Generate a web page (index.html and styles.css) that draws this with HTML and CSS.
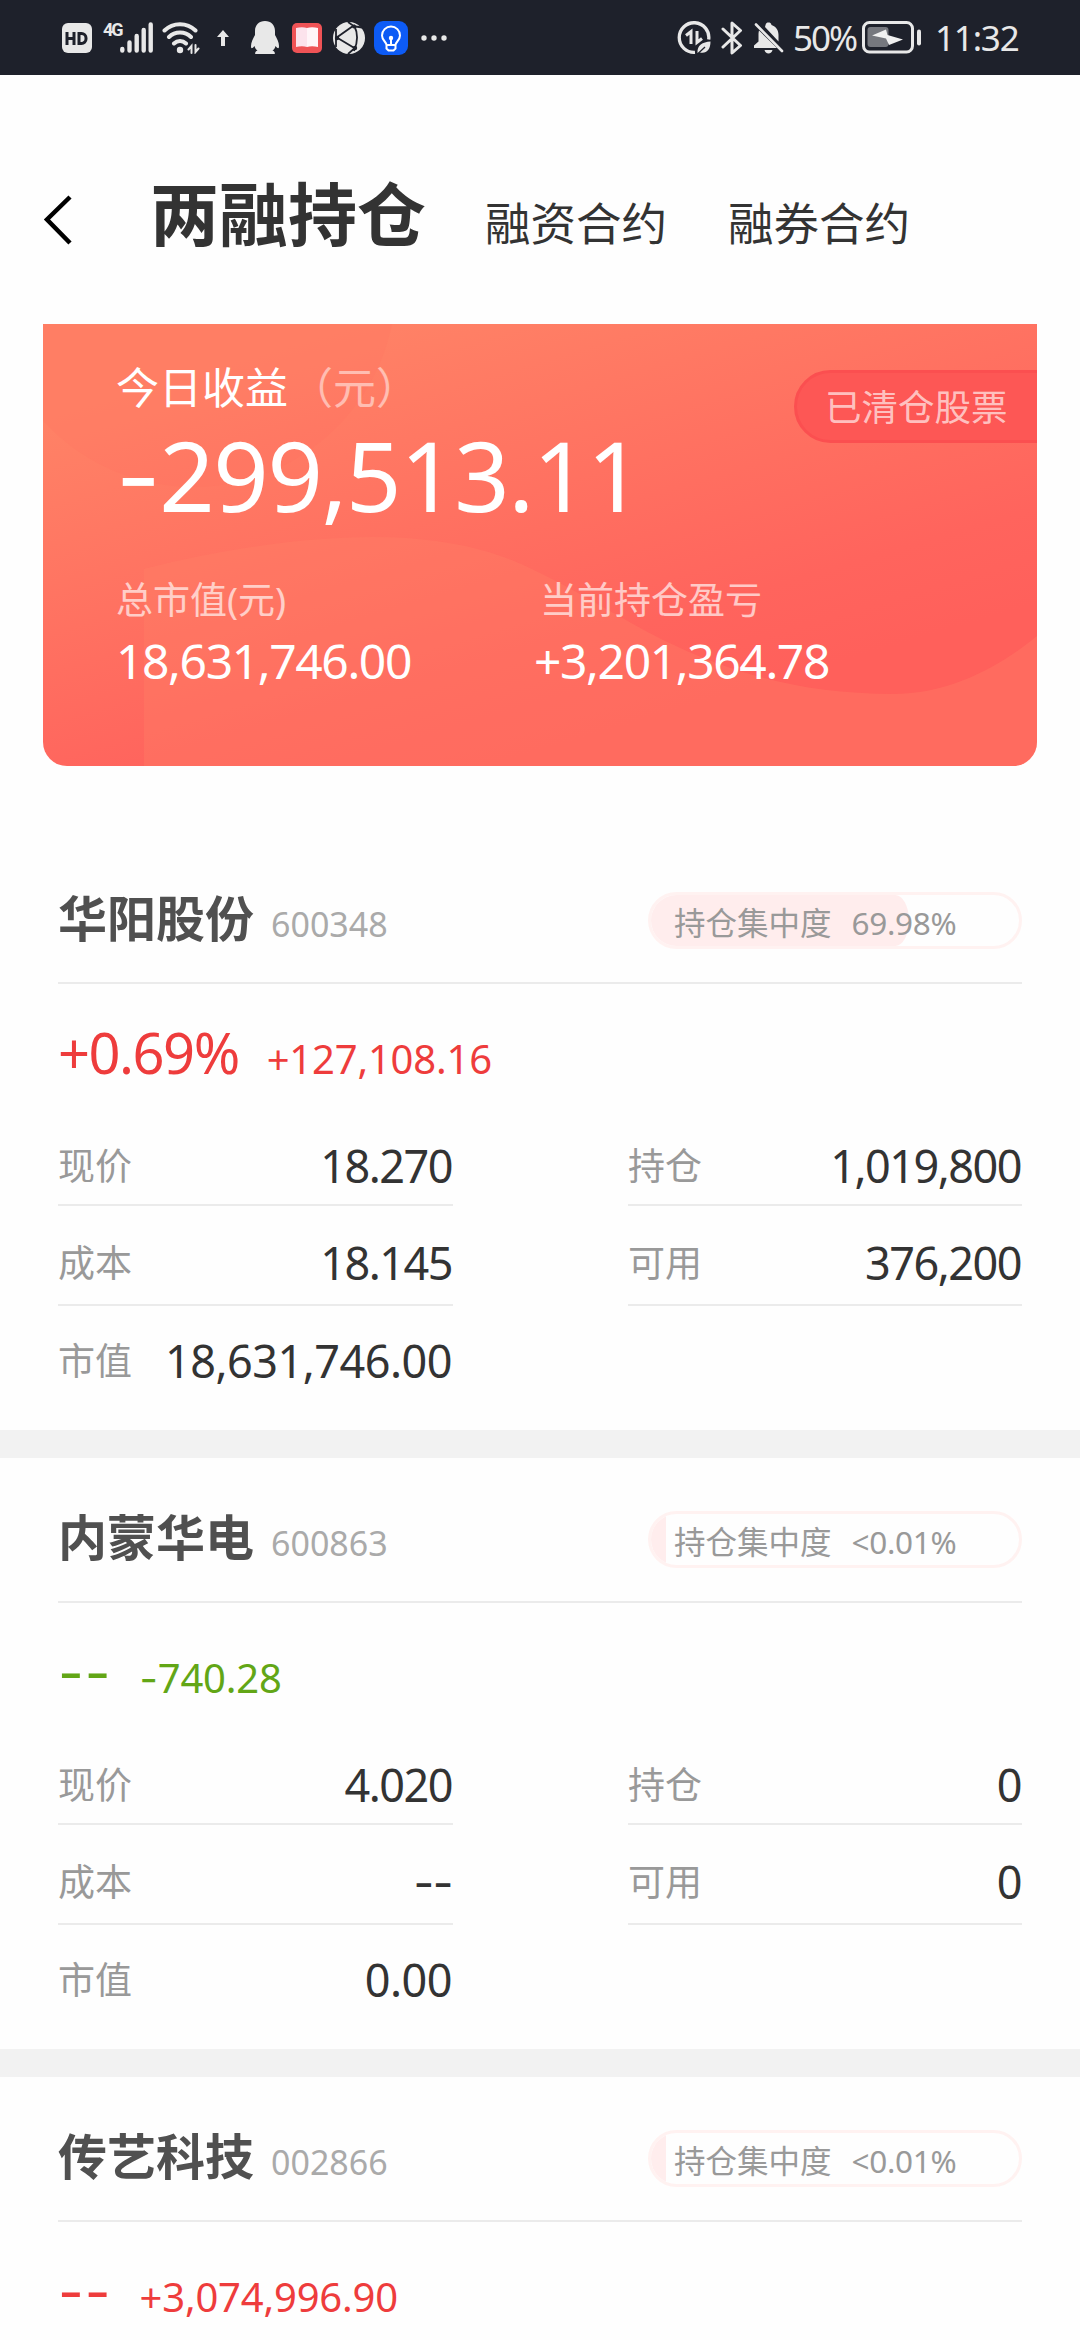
FILE: index.html
```html
<!DOCTYPE html>
<html lang="zh-CN">
<head>
    <meta charset="utf-8">
    <title>两融持仓</title>
    <link rel="stylesheet" href="styles.css">
</head>
<body>
    <div class="status-bar">
        <div class="status-left">
            <svg class="icon-hd" width="30" height="30" viewBox="0 0 30 30">
                <rect width="30" height="30" rx="6" fill="#e8e8e8"/>
                <path d="M5 9v13M12 9v13M5 15.500h7M17 10.500v10h2.500a4.500 4.500 0 0 0 4.500-4.500v-1a4.500 4.500 0 0 0-4.500-4.500z" fill="none" stroke="#1e212b" stroke-width="3"/>
            </svg>
            <span class="net">4G</span>
            <svg width="33" height="31" viewBox="0 0 33 31" stroke="#e8e8e8" stroke-width="4.400" stroke-linecap="round">
                <path d="M2.300 27v1.500M9.500 20.500v8M16.700 14v14.500M23.700 8v20.500M30.700 2.500v26"/>
            </svg>
            <svg class="icon-wifi" width="38" height="32" viewBox="0 0 38 32" fill="none" stroke="#e8e8e8" stroke-width="4" stroke-linecap="round">
                <path d="M2.500 8.500C11 0 25 0 33.500 8.500M7 15C13 9 23 9 29 15M12 21.500C15.500 18 20.500 18 24 21.500"/>
                <circle cx="18" cy="28" r="3.200" fill="#e8e8e8" stroke="none"/>
                <path d="M26.500 27.500l3-3.500v7M33.500 23v7l3-3.500" stroke-width="2"/>
            </svg>
            <svg class="icon-up" width="12" height="16" viewBox="0 0 12 16" fill="#e8e8e8">
                <path d="M6 0l6 7H8v9H4V7H0z"/>
            </svg>
            <svg class="icon-qq" width="28" height="33" viewBox="0 0 28 33" fill="#e8e8e8">
                <path d="M14 0C8 0 4 4 4 10v4C2 18 0 21 0 25c0 3 1 3 3.500 0 .5 2 1.500 3.500 3 4.500-2 .8-2.500 2-2.300 3.500h19.600c.2-1.500-.3-2.700-2.300-3.500 1.500-1 2.500-2.500 3-4.500 2.500 3 3.500 3 3.500 0 0-4-2-7-4-11v-4C24 4 20 0 14 0z"/>
            </svg>
            <svg class="icon-book" width="30" height="30" viewBox="0 0 30 30">
                <rect width="30" height="30" rx="5" fill="#ef5356"/>
                <path d="M4 5c4-1 8-1 11 0v19c-3-1-7-1-11 0z" fill="#fce3ec"/>
                <path d="M15 5c3-1 7-1 11 0v19c-4-1-8-1-11 0z" fill="#fff5f8"/>
            </svg>
            <svg class="icon-globe" width="32" height="32" viewBox="0 0 32 32">
                <circle cx="16" cy="16" r="16" fill="#e8e8e8"/>
                <path d="M3 16L20 4l12 2M3 15l20 12M21 3c4 8 4 17 0 26M3 7v18M15 0l7 5M23 25l-8 7" fill="none" stroke="#1e212b" stroke-width="1.800"/>
                <g fill="#1e212b"><circle cx="21" cy="4.500" r="2"/><circle cx="4" cy="16" r="2.200"/><circle cx="22" cy="26" r="2.200"/></g>
            </svg>
            <svg class="icon-bulb" width="34" height="34" viewBox="0 0 34 34">
                <rect width="34" height="34" rx="9" fill="#0d5bf5"/>
                <path d="M12.500 24c0-3-4.500-4.500-4.500-9.500a9 9 0 0 1 18 0c0 5-4.500 6.500-4.500 9.500zM12.500 24v3.500l2 2h5l2-2V24M17 18v6" fill="none" stroke="#fff" stroke-width="2"/>
                <circle cx="17" cy="17" r="2.200" fill="#fff"/>
            </svg>
            <svg class="icon-more" width="26" height="6" viewBox="0 0 26 6" fill="#e8e8e8">
                <circle cx="3" cy="3" r="2.700"/><circle cx="13" cy="3" r="2.700"/><circle cx="23" cy="3" r="2.700"/>
            </svg>
        </div>
        <div class="status-right">
            <svg width="34" height="34" viewBox="0 0 34 34" fill="none" stroke="#e8e8e8">
                <path d="M18 31.300A14.800 14.800 0 1 1 31.700 18.500" stroke-width="3.300"/>
                <path d="M9 14.500l5-4V23M20 10v11.500l5-4" stroke-width="3"/>
                <path d="M20.500 32c-.5-8 5-11 13-11.500 0 8-4 12.500-10.500 11z" fill="#e8e8e8" stroke="none"/>
                <path d="M20 33.500l8-7.500" stroke="#1e212b" stroke-width="1.300"/>
            </svg>
            <svg class="icon-bt" width="22" height="34" viewBox="0 0 22 34" fill="none" stroke="#e8e8e8" stroke-width="3" stroke-linejoin="round" stroke-linecap="round">
                <path d="M2 8l17.500 16.500L11 32V2l8.500 7.500L2 26"/>
            </svg>
            <svg class="icon-bell" width="30" height="32" viewBox="0 0 30 32">
                <path d="M11.500 3C12 1 13 .5 14.500.5S17 1 17.500 3C22 4.500 24.500 8 24.500 13v6.500L11 5M5 8.500L23 26H0v-2.500l4.500-4V13c0-2 .2-3 .5-4.500zM10.500 28h8c-.5 2-2 3.500-4 3.500s-3.500-1.500-4-3.500z" fill="#e8e8e8"/>
                <path d="M2 2.500L28 29" stroke="#e8e8e8" stroke-width="2.600" stroke-linecap="round"/>
            </svg>
            <span class="battery-text">50%</span>
            <svg class="icon-battery" width="59" height="33" viewBox="0 0 59 33">
                <rect x="1.500" y="1.500" width="49" height="29.500" rx="6" fill="none" stroke="#e8e8e8" stroke-width="3"/>
                <rect x="5.500" y="6" width="21" height="20" rx="3" fill="#76787e"/>
                <path d="M10 14.500L24 8.500l1.500 5.500L41 18.500 27 24l-3-6.500z" fill="#f0f0f0"/>
                <rect x="55" y="8.500" width="4" height="16" rx="2" fill="#e8e8e8"/>
            </svg>
            <span class="clock">11:32</span>
        </div>
    </div>

    <div class="nav">
        <svg class="back" width="30" height="56" viewBox="0 0 30 56" fill="none" stroke="#000" stroke-width="4.500">
            <path d="M28 5L5 27.500 28 51"/>
        </svg>
        <span class="tab active">两融持仓</span>
        <span class="tab">融资合约</span>
        <span class="tab">融券合约</span>
    </div>

    <div class="card">
        <svg class="card-bg" width="994" height="442" viewBox="0 0 994 442">
            <defs>
                <linearGradient id="base" gradientUnits="userSpaceOnUse" x1="390" y1="-20" x2="520" y2="420">
                    <stop offset="0" stop-color="#ff8266"/>
                    <stop offset="0.800" stop-color="#ff645d"/>
                    <stop offset="1" stop-color="#ff605b"/>
                </linearGradient>
            </defs>
            <rect width="994" height="442" fill="url(#base)"/>
            <circle cx="150" cy="-40" r="203" fill="#ff6b5c" fill-opacity="0.150"/>
            <path d="M101 442V245C180 225 260 213 330 213C420 213 470 235 497 249C540 270 580 296 620 316C690 350 760 370 850 370C910 370 960 340 994 312V442z" fill="#ff8068" fill-opacity="0.350"/>
        </svg>
        <div class="card-body">
            <div class="card-title">今日收益<span class="unit">（元）</span></div>
            <div class="card-profit"><span class="dash">-</span>299,513.11</div>
            <div class="card-totals">
                <div class="total">
                    <div class="total-label">总市值(元)</div>
                    <div class="total-value">18,631,746.00</div>
                </div>
                <div class="total">
                    <div class="total-label indent">当前持仓盈亏</div>
                    <div class="total-value">+3,201,364.78</div>
                </div>
            </div>
        </div>
        <div class="cleared">已清仓股票</div>
    </div>

    <div class="stock">
        <div class="stock-head">
            <span class="name">华阳股份</span>
            <span class="code">600348</span>
            <div class="ratio">
                <div class="ratio-fill" style="width: 69.98%"></div>
                <span class="ratio-label">持仓集中度</span>
                <span class="ratio-num">69.98%</span>
            </div>
        </div>
        <div class="gain up">
            <span class="gain-pct">+0.69%</span>
            <span class="gain-amount">+127,108.16</span>
        </div>
        <div class="grid">
            <div class="cell"><span class="label">现价</span><span class="value">18.270</span></div>
            <div class="cell"><span class="label">持仓</span><span class="value">1,019,800</span></div>
            <div class="cell"><span class="label">成本</span><span class="value">18.145</span></div>
            <div class="cell"><span class="label">可用</span><span class="value">376,200</span></div>
            <div class="cell"><span class="label">市值</span><span class="value money">18,631,746.00</span></div>
        </div>
    </div>

    <div class="stock">
        <div class="stock-head">
            <span class="name">内蒙华电</span>
            <span class="code">600863</span>
            <div class="ratio">
                <div class="ratio-fill min"></div>
                <span class="ratio-label">持仓集中度</span>
                <span class="ratio-num">&lt;0.01%</span>
            </div>
        </div>
        <div class="gain down">
            <span class="gain-pct"><span class="dash">--</span></span>
            <span class="gain-amount"><span class="dash">-</span>740.28</span>
        </div>
        <div class="grid">
            <div class="cell"><span class="label">现价</span><span class="value">4.020</span></div>
            <div class="cell"><span class="label">持仓</span><span class="value">0</span></div>
            <div class="cell"><span class="label">成本</span><span class="value"><span class="dash">--</span></span></div>
            <div class="cell"><span class="label">可用</span><span class="value">0</span></div>
            <div class="cell"><span class="label">市值</span><span class="value money">0.00</span></div>
        </div>
    </div>

    <div class="stock">
        <div class="stock-head">
            <span class="name">传艺科技</span>
            <span class="code">002866</span>
            <div class="ratio">
                <div class="ratio-fill min"></div>
                <span class="ratio-label">持仓集中度</span>
                <span class="ratio-num">&lt;0.01%</span>
            </div>
        </div>
        <div class="gain up">
            <span class="gain-pct"><span class="dash">--</span></span>
            <span class="gain-amount">+3,074,996.90</span>
        </div>
    </div>
</body>
</html>
```

FILE: styles.css
```css
* {
    box-sizing: border-box;
}
body {
    margin: 0;
    width: 1080px;
    height: 2340px;
    overflow: hidden;
    background: #fefefe;
    color: #333;
    font-family: "Noto Sans", "Noto Sans CJK SC", sans-serif;
}
svg {
    display: block;
    flex: none;
}

/* phone status bar */
.status-bar {
    display: flex;
    justify-content: space-between;
    height: 75px;
    padding: 0 62px;
    background: #1e212b;
    color: #e8e8e8;
}
.status-left, .status-right {
    display: flex;
    align-items: center;
}
.net {
    width: 17px;
    margin: 0 0 16px 11px;
    font: bold 18px/20px Roboto, sans-serif;
    letter-spacing: -2px;
}
.icon-wifi {
    margin-left: 9px;
}
.icon-up {
    margin-left: 17px;
}
.icon-qq {
    margin-left: 22px;
}
.icon-book {
    margin-left: 13px;
}
.icon-globe {
    margin-left: 11px;
}
.icon-bulb {
    margin-left: 9px;
}
.icon-more {
    margin-left: 13px;
}
.icon-bt {
    margin-left: 10px;
}
.icon-bell {
    margin-left: 11px;
}
.battery-text {
    width: 62px;
    margin: 0 7px 0 9px;
    font-size: 35px;
    line-height: 77px;
    letter-spacing: -2px;
}
.clock {
    width: 83px;
    margin-left: 14px;
    font-size: 35px;
    line-height: 77px;
    letter-spacing: -1.200px;
}

.nav {
    display: flex;
    align-items: baseline;
    height: 249px;
    padding: 89px 0 0 40px;
}
.back {
    align-self: flex-start;
    margin: 28px 78px 0 2px;
}
.tab {
    margin-right: 61px;
    font-size: 45.500px;
    line-height: 100px;
}
.tab.active {
    margin-right: 59px;
    font-size: 69px;
    font-weight: bold;
}

.card {
    position: relative;
    width: 994px;
    height: 442px;
    margin: 0 auto 73px;
    overflow: hidden;
    border-radius: 0 0 24px 24px;
    color: #fff;
}
.card-bg {
    position: absolute;
    top: 0;
    left: 0;
}
.card-body {
    position: relative;
    padding: 34px 0 0 73px;
}
.card-title {
    font-size: 43px;
    line-height: 60px;
}
.unit {
    margin-left: 2px;
    opacity: 0.5;
}
.card-profit {
    height: 117px;
    font-size: 97px;
    line-height: 113px;
    letter-spacing: -1.400px;
}
.dash {
    font-family: Inter, sans-serif;
    line-height: 1;
}
.card-totals {
    display: flex;
    margin-top: 40px;
}
.total {
    width: 418px;
}
.total-label {
    font-size: 37px;
    line-height: 50px;
    opacity: 0.65;
}
.total-label.indent {
    padding-left: 6px;
}
.total-value {
    margin-top: 4px;
    font-size: 48px;
    line-height: 64px;
    letter-spacing: -1.400px;
}
.cleared {
    position: absolute;
    top: 46px;
    right: -3px;
    width: 246px;
    height: 73px;
    padding-left: 28px;
    border: 3px solid #fb4f50;
    border-radius: 37px 0 0 37px;
    background: #fd5755;
    color: rgba(255, 255, 255, 0.65);
    font-size: 36.500px;
    line-height: 69px;
}

.stock {
    height: 619px;
    padding: 0 58px;
    border-bottom: 28px solid #f2f2f2;
}
.stock:last-child {
    height: auto;
    border: 0;
}
.stock-head {
    display: flex;
    align-items: baseline;
    height: 145px;
    padding-top: 53px;
    border-bottom: 2px solid #ebebeb;
}
.name {
    color: #505050;
    font-size: 49px;
    font-weight: bold;
    line-height: 53px;
}
.code {
    margin-left: 17px;
    color: #aaa;
    font-size: 34px;
}
.ratio {
    position: relative;
    display: flex;
    align-self: flex-start;
    width: 374px;
    height: 57px;
    margin-left: auto;
    padding-left: 23px;
    overflow: hidden;
    border: 3px solid #fff2f1;
    border-radius: 29px;
    color: #999;
    font-size: 31.500px;
    line-height: 55px;
}
.ratio-fill {
    position: absolute;
    top: 0;
    left: 0;
    height: 51px;
    border-radius: 0 14px 14px 0 / 0 26px 26px 0;
    background: #ffeded;
}
.ratio-fill.min {
    width: 15px;
    border-radius: 0;
}
.ratio-label {
    position: relative;
    margin-right: 20px;
}
.ratio-num {
    position: relative;
    letter-spacing: -0.300px;
}

.gain {
    display: flex;
    align-items: baseline;
    height: 136px;
    line-height: 136px;
}
.gain-pct {
    margin-right: 28px;
    font-size: 56px;
    letter-spacing: -1.500px;
}
.gain-pct .dash {
    letter-spacing: 1px;
}
.gain-amount {
    font-size: 40px;
    letter-spacing: -0.200px;
}
.up {
    color: #ee3c3c;
}
.down {
    color: #62a616;
}

.grid {
    display: grid;
    grid-template-columns: 395px 394px;
    grid-template-rows: 86px 100px 108px;
    justify-content: space-between;
}
.cell {
    display: flex;
    align-items: center;
    justify-content: space-between;
    padding-top: 6px;
    border-bottom: 2px solid #ebebeb;
}
.cell:nth-child(n+3) {
    padding-top: 14px;
}
.cell:nth-child(5) {
    padding-top: 0;
    border: 0;
}
.label {
    margin-bottom: 2px;
    color: #999;
    font-size: 37px;
}
.value {
    margin-right: 1px;
    font-size: 45px;
    letter-spacing: -1.500px;
}
.value.money {
    letter-spacing: -0.500px;
}
```
